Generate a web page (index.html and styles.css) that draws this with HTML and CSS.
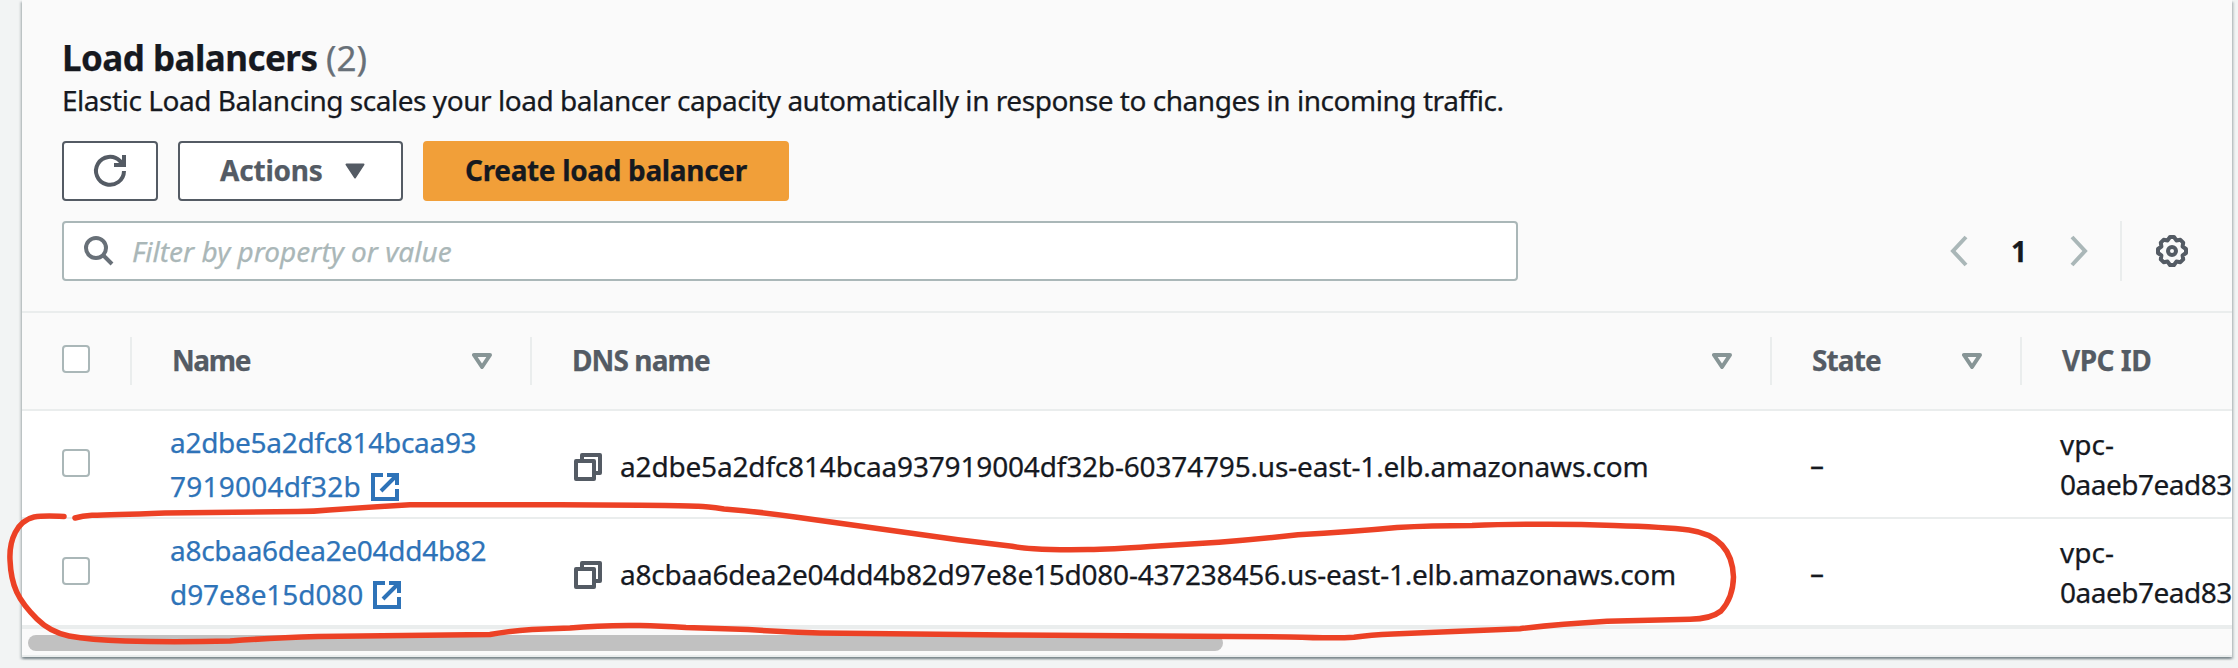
FILE: index.html
```
<!DOCTYPE html>
<html lang="en">
<head>
<meta charset="utf-8">
<title>Load balancers</title>
<link rel="stylesheet" href="styles.css">
</head>
<body>
<svg class="defs" width="0" height="0">
  <symbol id="external" viewBox="0 0 28 28"><path d="M12 2H2v24h24V16M16 2h10v10M25 3 10 18" fill="none" stroke="currentColor" stroke-width="4"/></symbol>
  <symbol id="copy" viewBox="0 0 28 28"><path d="M2 8h18v18H2zM8 8V2h18v18h-6" fill="none" stroke="currentColor" stroke-width="4" stroke-linejoin="round"/></symbol>
  <symbol id="sort" viewBox="0 0 20 16"><path d="M2 2h16l-8 12z" fill="none" stroke="currentColor" stroke-width="4" stroke-linejoin="round"/></symbol>
</svg>
<main class="panel">
  <header class="head">
    <h1 class="title">Load balancers <span class="count">(2)</span></h1>
    <p class="desc">Elastic Load Balancing scales your load balancer capacity automatically in response to changes in incoming traffic.</p>
    <div class="actions">
      <button class="btn btn-icon" aria-label="Refresh"><svg width="32" height="32" viewBox="0 0 32 32" fill="none" stroke="currentColor" stroke-width="4"><path d="M30 16a14 14 0 1 1-4-10l4 4M30 0v10H20"/></svg></button>
      <button class="btn btn-menu"><span class="label">Actions</span><svg width="20" height="16" viewBox="0 0 20 16"><path d="M1.500 1.500h17L10 14.500z" fill="currentColor" stroke="currentColor" stroke-width="2" stroke-linejoin="round"/></svg></button>
      <button class="btn btn-primary"><span class="label">Create load balancer</span></button>
    </div>
    <div class="tools">
      <div class="filter"><svg width="30" height="30" viewBox="0 0 30 30" fill="none" stroke="currentColor" stroke-width="4"><circle cx="12" cy="12" r="10"/><path d="m19 19 9 9"/></svg><span class="placeholder">Filter by property or value</span></div>
      <nav class="pager">
        <svg class="chev" width="18" height="32" viewBox="0 0 18 32"><path d="M16 2 3 16l13 14"/></svg>
        <b class="page">1</b>
        <svg class="chev" width="18" height="32" viewBox="0 0 18 32"><path d="m2 2 13 14L2 30"/></svg>
        <i class="rule"></i>
        <svg class="gear" width="32" height="32" viewBox="0 0 32 32"><path d="M14 2h4l2.400 3.400 4-.6 2.800 2.800-.6 4L30 14v4l-3.400 2.400.6 4-2.800 2.800-4-.6L18 30h-4l-2.400-3.400-4 .6-2.800-2.800.6-4L2 18v-4l3.400-2.400-.6-4 2.800-2.800 4 .6z"/><circle cx="16" cy="16" r="4"/></svg>
      </nav>
    </div>
  </header>
  <section class="table">
    <div class="row row-head">
      <div class="th"><i class="check"></i></div>
      <div class="th"><span class="label name">Name</span><svg class="sort"><use href="#sort"/></svg></div>
      <div class="th"><span class="label">DNS name</span><svg class="sort"><use href="#sort"/></svg></div>
      <div class="th"><span class="label">State</span><svg class="sort"><use href="#sort"/></svg></div>
      <div class="th"><span class="label vpc-label">VPC ID</span></div>
    </div>
    <div class="row">
      <div class="td"><i class="check"></i></div>
      <div class="td"><a class="link"><span class="line-a">a2dbe5a2dfc814bcaa93</span><br><span class="line-b">7919004df32b</span><svg class="ext"><use href="#external"/></svg></a></div>
      <div class="td dns"><svg class="copy"><use href="#copy"/></svg><span class="host">a2dbe5a2dfc814bcaa937919004df32b-60374795.us-east-1.elb.amazonaws.com</span></div>
      <div class="td state">–</div>
      <div class="td vpc">vpc-<br><span class="vpc-id">0aaeb7ead83</span></div>
    </div>
    <div class="row">
      <div class="td"><i class="check"></i></div>
      <div class="td"><a class="link"><span class="line-a">a8cbaa6dea2e04dd4b82</span><br><span class="line-c">d97e8e15d080</span><svg class="ext"><use href="#external"/></svg></a></div>
      <div class="td dns"><svg class="copy"><use href="#copy"/></svg><span class="host host-b">a8cbaa6dea2e04dd4b82d97e8e15d080-437238456.us-east-1.elb.amazonaws.com</span></div>
      <div class="td state">–</div>
      <div class="td vpc">vpc-<br><span class="vpc-id">0aaeb7ead83</span></div>
    </div>
  </section>
  <div class="scroll"><div class="thumb"></div></div>
</main>
<svg class="marker" width="2238" height="668" viewBox="0 0 2238 668"><path d="M64 516.500C50 516 44 515.500 34 517C17 521 9 540 10 560C11 586 18 600 37 619Q50 632 69 636Q90 640 125 641Q172 642.500 230 641Q270 638 318 636.500L490 634.500Q510 631 532 629.500L570 628Q600 625 640 625.500Q660 626 686 627.500L748 629.500Q784 632 820 633L1008 635L1160 636L1290 637Q1335 638.500 1354 637.300Q1370 635 1393 634L1520 628.700Q1560 624 1607 621.300L1690 619.300Q1711 619 1721 611Q1733 598 1733.500 577Q1732 536 1689 530Q1665 527 1614 525.500Q1575 524 1535 524.300Q1500 524.300 1472 525.500Q1430 525.500 1397 527.500Q1350 532 1298 534.800Q1260 539 1219 542.300L1150 546.500Q1110 549.500 1088 549.500Q1055 550 1034 548.700Q1020 548 1012 546.300Q985 543 958 539.700L797 517.300Q762 512 724 509Q705 506 697 506.200Q670 505 560 504.700H410Q370 507 329 510Q314 511.500 298 511.500L165 513Q110 515 92 515.300Q82 516 75 518"/></svg>
</body>
</html>
```
FILE: styles.css
```
* { box-sizing: border-box; }
body {
  margin: 0;
  height: 668px;
  overflow: hidden;
  background: #f2f4f4;
  color: #16191f;
  font: 28px/40px "Noto Sans", "Open Sans", sans-serif;
  font-variant-ligatures: common-ligatures;
  -webkit-text-stroke: 0.25px currentColor;
}
.defs { position: absolute; }
svg { display: block; flex: none; overflow: visible; }
.panel {
  width: 2210px;
  height: 657px;
  margin-left: 22px;
  background: #fafafa;
  box-shadow: 0 2px 2px rgba(0, 28, 36, .3), 2px 2px 2px rgba(0, 28, 36, .15), -2px 2px 2px rgba(0, 28, 36, .15);
}
.head { height: 313px; padding: 35px 40px 0; border-bottom: 2px solid #eaeded; }
.title { margin: 0; font-size: 35px; line-height: 45px; letter-spacing: -0.54px; }
.count { font-weight: 400; color: #687078; letter-spacing: 0; }
.desc { margin: 0; height: 61px; line-height: 40px; letter-spacing: -0.46px; white-space: nowrap; }
.actions { display: flex; gap: 20px; }
.btn {
  display: flex;
  align-items: center;
  height: 60px;
  border: 2px solid #545b64;
  border-radius: 4px;
  background: #fff;
  color: #545b64;
  font: 700 28px/40px "Noto Sans", sans-serif;
  letter-spacing: -0.2px;
  padding: 0 38px 0 40px;
  white-space: nowrap;
}
.label { margin-top: -2px; }
.btn-icon { width: 96px; padding: 0 30px; }
.btn-menu { width: 225px; justify-content: space-between; padding: 0 36px 0 40px; }
.btn-primary { width: 366px; background: #f19f39; border-color: #f19f39; color: #16191f; letter-spacing: -0.34px; }
.tools { display: flex; margin-top: 20px; justify-content: space-between; }
.filter {
  display: flex;
  align-items: center;
  width: 1456px;
  height: 60px;
  padding-left: 20px;
  gap: 18px;
  border: 2px solid #aab7b8;
  border-radius: 4px;
  background: #fff;
  color: #687078;
}
.placeholder { color: #aab7b8; font-style: italic; }
.pager { display: flex; align-items: center; padding-right: 4px; }
.chev { fill: none; stroke: #aab7b8; stroke-width: 4; }
.page { width: 16px; margin: 0 43px; }
.rule { width: 2px; height: 60px; margin: 0 34px 0 32px; background: #eaeded; }
.gear { fill: none; stroke: #545b64; stroke-width: 4; stroke-linejoin: round; }
.row {
  display: grid;
  grid-template-columns: 110px 400px 1240px 250px 210px;
  height: 108px;
  background: #fff;
  border-bottom: 2px solid #eaeded;
  overflow: hidden;
}
.row-head { height: 98px; background: #fafafa; color: #545b64; font-weight: 700; }
.th {
  display: flex;
  align-items: center;
  justify-content: space-between;
  height: 48px;
  margin-top: 24px;
  padding: 0 38px 0 40px;
  border-right: 2px solid #eaeded;
  letter-spacing: -0.9px;
}
.th:last-child { border-right: 0; }
.name { letter-spacing: -1.4px; }
.vpc-label { letter-spacing: -0.5px; }
.sort { width: 20px; height: 16px; color: #879596; }
.check { display: block; width: 28px; height: 28px; border: 2px solid #aab7b8; border-radius: 4px; background: #fff; }
.th .check { margin-top: -4px; }
.td { display: flex; align-items: center; padding-left: 38px; min-width: 0; }
.td:first-child { padding: 0 0 2px 40px; }
.link { display: block; color: #2e73b8; line-height: 44px; }
.line-a { letter-spacing: -0.29px; }
.line-b { letter-spacing: 0.22px; }
.line-c { letter-spacing: -0.08px; }
.ext { display: inline-block; width: 28px; height: 28px; margin-left: 10px; vertical-align: -4px; }
.dns { padding-left: 42px; gap: 18px; padding-top: 6px; }
.host { margin-top: -2px; letter-spacing: -0.17px; white-space: nowrap; }
.host-b { letter-spacing: -0.23px; }
.copy { width: 28px; height: 28px; color: #545b64; }
.vpc { display: block; padding-top: 13px; }
.vpc-id { letter-spacing: -0.5px; }
.scroll { height: 30px; border-top: 2px solid #eaeded; border-bottom: 2px solid #eaeded; padding: 6px; }
.thumb { width: 1195px; height: 16px; border-radius: 8px; background: #c1c1c1; }
.marker { position: absolute; left: 0; top: 0; fill: none; stroke: #ec4125; stroke-width: 5.500; stroke-linecap: round; stroke-linejoin: round; }
```
